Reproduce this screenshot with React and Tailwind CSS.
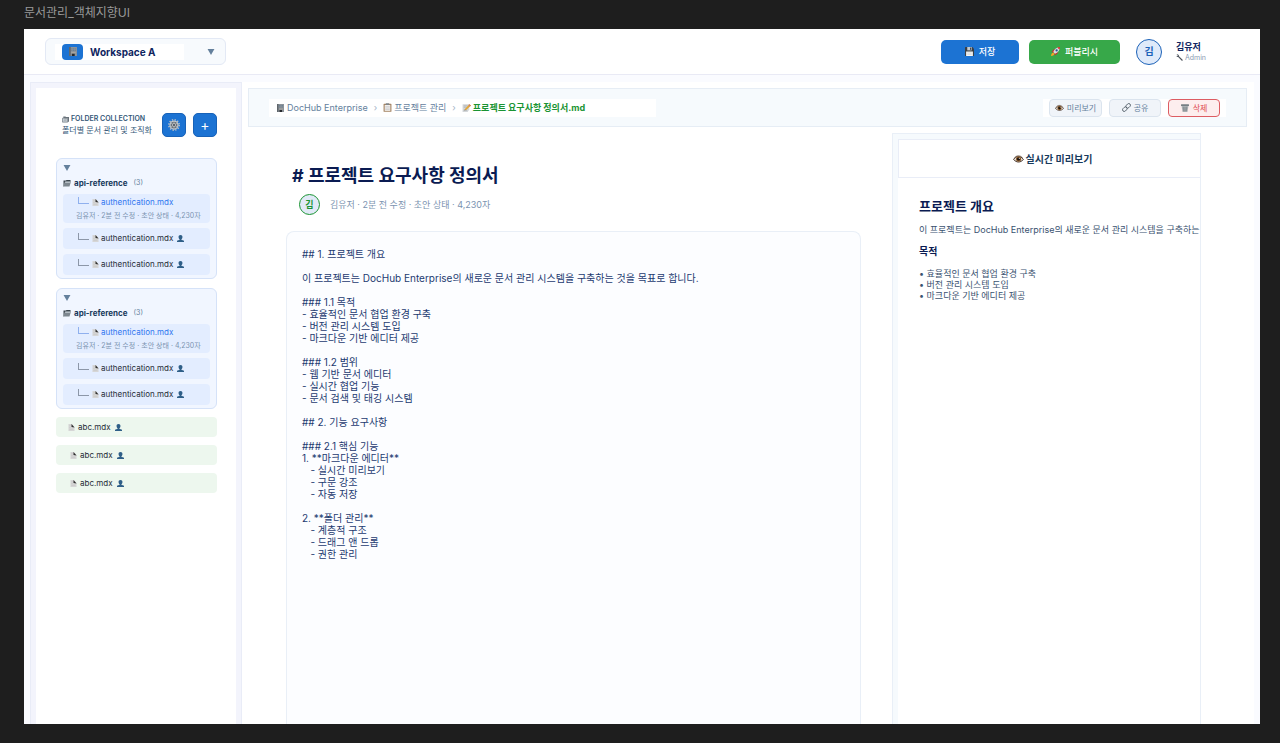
import React, { useState } from "react";

const INITIAL_TEXT = `## 1. 프로젝트 개요

이 프로젝트는 DocHub Enterprise의 새로운 문서 관리 시스템을 구축하는 것을 목표로 합니다.

### 1.1 목적
- 효율적인 문서 협업 환경 구축
- 버전 관리 시스템 도입
- 마크다운 기반 에디터 제공

### 1.2 범위
- 웹 기반 문서 에디터
- 실시간 협업 기능
- 문서 검색 및 태깅 시스템

## 2. 기능 요구사항

### 2.1 핵심 기능
1. **마크다운 에디터**
   - 실시간 미리보기
   - 구문 강조
   - 자동 저장

2. **폴더 관리**
   - 계층적 구조
   - 드래그 앤 드롭
   - 권한 관리`;

const folders = [
	{ id: 1, name: "api-reference", files: ["authentication.mdx", "authentication.mdx", "authentication.mdx"] },
	{ id: 2, name: "api-reference", files: ["authentication.mdx", "authentication.mdx", "authentication.mdx"] },
];

const looseFiles = [
	{ id: 1, name: "abc.mdx", indent: "pl-3" },
	{ id: 2, name: "abc.mdx", indent: "pl-[14px]" },
	{ id: 3, name: "abc.mdx", indent: "pl-[14px]" },
];

/* ---------- icons ---------- */

const BuildingIcon = ({ className }) => (
	<svg viewBox="0 0 16 16" className={className} aria-hidden="true">
		<rect x="1" y="0" width="14" height="16" fill="#8d9399" />
		<rect x="1" y="0" width="3" height="16" fill="#5f666c" />
		<path d="M5 2h2v2H5zM8 2h2v2H8zM11 2h2v2h-2zM5 5h2v2H5zM8 5h2v2H8zM11 5h2v2h-2z" fill="#6c8193" />
		<rect x="5" y="9" width="8" height="2" fill="#a9a6a0" />
		<rect x="6" y="12" width="5" height="4" fill="#26292d" />
	</svg>
);

const FloppyIcon = ({ className }) => (
	<svg viewBox="0 0 16 16" className={className} aria-hidden="true">
		<path d="M0 1a1 1 0 0 1 1-1h12l3 3v12a1 1 0 0 1-1 1H1a1 1 0 0 1-1-1z" fill="#3a3f45" />
		<rect x="4" y="0" width="8" height="6" fill="#c3c9ce" />
		<rect x="9" y="1" width="2" height="4" fill="#3a3f45" />
		<rect x="2" y="8" width="12" height="8" fill="#f6f6f4" />
		<path d="M4 10.500h8M4 13h8" stroke="#b6bcc1" strokeWidth="0.800" />
	</svg>
);

const RocketIcon = ({ className }) => (
	<svg viewBox="0 0 16 16" className={className} aria-hidden="true">
		<path d="M0 16c0-4 2-6 4-6l2 2c0 2-2 4-6 4z" fill="#f5a623" />
		<path d="M1 9l4-5h3L5 10zM7 15l5-4V8l-6 3z" fill="#c9302c" />
		<path d="M4 9c2-5 6-9 12-9 0 6-4 10-9 12z" fill="#d9dde1" />
		<path d="M11 1c2-1 4-1 5-1 0 1 0 3-1 5z" fill="#d6382f" />
		<circle cx="10" cy="6" r="2" fill="#2c4f8f" />
	</svg>
);

const WrenchIcon = ({ className }) => (
	<svg viewBox="0 0 16 16" className={className} aria-hidden="true">
		<path d="M1 0l4 1 2 3v1l9 9-2 2-9-9H3L0 4l3 1 1-2z" fill="#4e545c" />
	</svg>
);

const FoldersIcon = ({ className }) => (
	<svg viewBox="0 0 16 16" className={className} aria-hidden="true">
		<path d="M3 1h5l1 1h7v11h-3V5H3z" fill="#69737b" />
		<path d="M1 5h4l1 1h7v8H1z" fill="#c9d0d5" stroke="#69737b" strokeWidth="1.500" />
		<path d="M4 9.500h6" stroke="#69737b" />
	</svg>
);

const FolderIcon = ({ className }) => (
	<svg viewBox="0 0 16 16" className={className} aria-hidden="true">
		<path d="M1 3h5l1-1h8v4H4l-2 9H1z" fill="#3c464e" />
		<path d="M4 5h12l-3 10H1z" fill="#7d878f" />
		<path d="M4.500 5H16l-1 3H4z" fill="#b4bdc4" />
	</svg>
);

const GearIcon = ({ className }) => (
	<svg viewBox="0 0 24 24" className={className} aria-hidden="true">
		<circle cx="12" cy="12" r="10.500" fill="none" stroke="#b9bec3" strokeWidth="3" strokeDasharray="2.600 2.890" />
		<circle cx="12" cy="12" r="8" fill="#686f76" stroke="#c6cacd" strokeWidth="2.500" />
		<path d="M12 5v14M6 8.500l12 7M18 8.500l-12 7" stroke="#b3b8bc" strokeWidth="1.500" />
		<circle cx="12" cy="12" r="3" fill="#39424b" stroke="#d3d7da" strokeWidth="1.500" />
	</svg>
);

const PageIcon = ({ className }) => (
	<svg viewBox="0 0 16 16" className={className} aria-hidden="true">
		<path d="M1 0h8l6 7v9H1z" fill="#d6d6d6" />
		<path d="M8 0l7 8-7-1z" fill="#2f2f2f" />
		<path d="M3 4h3M3 8h3M3 12h9" stroke="#bdbdbd" />
	</svg>
);

const UserIcon = ({ className }) => (
	<svg viewBox="0 0 16 16" className={className} aria-hidden="true">
		<path d="M8 0c3 0 4.500 2 4.500 4.500S11 9 10 9.500V11l6 2v3H0v-3l6-2V9.500C5 9 3.500 7 3.500 4.500S5 0 8 0z" fill="#2f5f88" />
	</svg>
);

const ClipboardIcon = ({ className }) => (
	<svg viewBox="0 0 16 16" className={className} aria-hidden="true">
		<rect x="1" y="1.500" width="14" height="14" rx="1" fill="#a58463" />
		<rect x="3" y="3.500" width="10" height="10.500" fill="#f1efec" />
		<rect x="5" y="0.500" width="6" height="3" fill="#7f868c" />
		<path d="M4 6.500h8M4 9h8M4 11.500h8" stroke="#b9bcc0" />
	</svg>
);

const MemoIcon = ({ className }) => (
	<svg viewBox="0 0 16 16" className={className} aria-hidden="true">
		<path d="M1 2h12v9l-3 5H1z" fill="#d3d6d9" />
		<path d="M3 5h7M3 7.500h5M3 13h6" stroke="#9fa4aa" />
		<path d="M13 2l3 2.500L8 12l-3.500 1L5.500 10z" fill="#e2a637" />
		<path d="M13 2l3 2.500-2 1.500L11.500 3.500z" fill="#cf7a6b" />
		<path d="M4.500 13l.5-1.500 1 1z" fill="#333" />
	</svg>
);

const EyeIcon = ({ className }) => (
	<svg viewBox="0 0 20 16" className={className} aria-hidden="true">
		<path d="M1 9c3-5 6-6 9-6s6 2 9 6c-3 3-6 4.500-9 4.500S4 12 1 9z" fill="#e6dcd3" stroke="#4b3c33" strokeWidth="1.800" />
		<path d="M2 6c3-3 5-4 8-4s6 1.500 8 4" fill="none" stroke="#7b6a60" />
		<circle cx="10" cy="8" r="4.800" fill="#8a5a2b" />
		<circle cx="10" cy="8" r="2.800" fill="#17110d" />
		<circle cx="11.500" cy="6.500" r="1" fill="#fff" />
	</svg>
);

const LinkIcon = ({ className }) => (
	<svg viewBox="0 0 16 16" className={className} fill="none" stroke="#4c5862" strokeWidth="1.500" aria-hidden="true">
		<rect x="6.500" y="2" width="9" height="6" rx="3" transform="rotate(-45 11 5)" />
		<rect x="0.500" y="8" width="9" height="6" rx="3" transform="rotate(-45 5 11)" />
	</svg>
);

const TrashIcon = ({ className }) => (
	<svg viewBox="0 0 16 16" className={className} aria-hidden="true">
		<path d="M1 3h14l-2 13H3z" fill="#b4b9bc" />
		<path d="M4.500 5l1 10M8 5v10M11.500 5l-1 10M3 8h10M3.500 12h9" stroke="#6d7479" strokeWidth="0.900" />
		<rect x="0" y="0.500" width="16" height="3.500" rx="1" fill="#777f84" />
	</svg>
);

const Triangle = ({ className }) => (
	<svg viewBox="0 0 8 7" className={className} aria-hidden="true">
		<path d="M0 0h8L4 7z" fill="#64809c" />
	</svg>
);

/* ---------- header ---------- */

const Header = () => (
	<header className="flex h-[46px] shrink-0 items-center border-b border-[#e9eaf5] bg-white pl-[21px] pr-[54px]">
		<button className="flex h-[27px] w-[181px] items-center rounded-md border border-[#e3e9f5] bg-[#f7fafd] pl-[9px] pr-[10px]">
			<span className="flex h-4 w-[129px] items-center gap-[7px] bg-white pl-[7px]">
				<span className="flex h-4 w-[21px] items-center justify-center rounded-sm bg-[#1c73d3]">
					<BuildingIcon className="h-[9px] w-[10px]" />
				</span>
				<span className="text-[10px] font-bold leading-4 text-[#0f2560]">Workspace A</span>
			</span>
			<Triangle className="ml-auto h-[6px] w-[8px]" />
		</button>
		<div className="ml-auto flex items-center">
			<button className="flex h-6 w-[78px] items-center justify-center gap-[5px] rounded-[5px] bg-[#1c73d3] text-[9px] font-medium text-white">
				<FloppyIcon className="h-[9px] w-[9px]" />
				저장
			</button>
			<button className="ml-[10px] flex h-6 w-[91px] items-center justify-center gap-[5px] rounded-[5px] bg-[#37a849] text-[9px] font-medium text-white">
				<RocketIcon className="h-[9px] w-[9px]" />
				퍼블리시
			</button>
			<span className="ml-4 flex h-[26px] w-[26px] items-center justify-center rounded-full border border-[#1c62b8] bg-[#dfeafa] text-[10px] font-bold text-[#1c62b8]">
				김
			</span>
			<div className="ml-[14px] flex w-[30px] flex-col whitespace-nowrap">
				<span className="text-[9px] font-bold leading-3 text-[#0f2560]">김유저</span>
				<span className="flex items-center gap-[2px] text-[7px] leading-[10px] text-[#8a9bb3]">
					<WrenchIcon className="h-[7px] w-[7px]" />
					Admin
				</span>
			</div>
		</div>
	</header>
);

/* ---------- sidebar ---------- */

const Branch = ({ active }) => (
	<span
		className={
			active
				? "mb-[3px] h-[7px] w-[11px] border-b border-l border-[#8fb0ee]"
				: "mb-[3px] h-[7px] w-[11px] border-b border-l border-[#8c97a8]"
		}
	></span>
);

const FolderCard = ({ folder }) => {
	const [open, setOpen] = useState(true);

	return (
		<section className="flex flex-col rounded-md border border-[#d5e2f8] bg-[#f1f6ff] px-[6px] pb-[3px] pt-[5px]">
			<button
				onClick={() => setOpen(!open)}
				aria-label="폴더 접기"
				className="flex h-2 w-2 items-center justify-center"
			>
				<Triangle className="h-[6px] w-[8px]" />
			</button>
			<h2 className="mt-[5px] flex items-center text-[8px] leading-3 text-[#183a5c]">
				<FolderIcon className="mr-[3px] h-2 w-2" />
				<span className="font-bold">{folder.name}</span>
				<span className="ml-[6px] text-[7px] text-[#64809c]">({folder.files.length})</span>
			</h2>
			{open && (
				<ul className="mt-[5px] flex flex-col gap-[5px]">
					{folder.files.map((file, index) =>
						index === 0 ? (
							<li key={index} className="h-[29px] rounded bg-[#e3edff] pt-[2px]">
								<a href="#" className="flex items-center pl-[15px] text-[8px] leading-3 text-[#2f76f0]">
									<Branch active />
									<PageIcon className="ml-[3px] mr-[2px] h-[7px] w-[7px]" />
									{file}
								</a>
								<p className="whitespace-nowrap pl-[13px] pt-[2px] text-[7px] leading-3 text-[#7b93b0]">
									김유저 · 2분 전 수정 · 초안 상태 · 4,230자
								</p>
							</li>
						) : (
							<li key={index} className="h-[21px] rounded bg-[#e3edff] pt-1">
								<a href="#" className="flex items-center pl-[15px] text-[8px] leading-3 text-[#262c36]">
									<Branch />
									<PageIcon className="ml-[3px] mr-[2px] h-[7px] w-[7px]" />
									{file}
									<UserIcon className="ml-1 h-[7px] w-[7px]" />
								</a>
							</li>
						)
					)}
				</ul>
			)}
		</section>
	);
};

const Sidebar = () => (
	<aside className="flex w-[212px] shrink-0 flex-col border border-b-0 border-[#e9ecf7] bg-[#f3f4fc] px-[5px] pt-[5px]">
		<div className="flex-1 bg-white pl-5 pr-[19px] pt-[25px]">
			<div className="flex items-center">
				<div className="flex w-[101px] flex-col whitespace-nowrap pl-[6px]">
					<h1 className="flex items-center gap-[2px] text-[7px] font-semibold leading-[10px] text-[#355878]">
						<FoldersIcon className="h-[7px] w-[7px]" />
						FOLDER COLLECTION
					</h1>
					<p className="text-[8px] leading-3 text-[#355878]">폴더별 문서 관리 및 조직화</p>
				</div>
				<button
					aria-label="설정"
					className="ml-auto flex h-6 w-6 items-center justify-center rounded-[5px] border border-[#1862b8] bg-[#1c73d3]"
				>
					<GearIcon className="h-3 w-3" />
				</button>
				<button
					aria-label="추가"
					className="ml-[7px] flex h-6 w-6 items-center justify-center rounded-[5px] border border-[#1862b8] bg-[#1c73d3] text-[14px] leading-4 text-white"
				>
					+
				</button>
			</div>
			<div className="mt-[21px] flex flex-col gap-[9px]">
				{folders.map((folder) => (
					<FolderCard key={folder.id} folder={folder} />
				))}
			</div>
			<ul className="mt-2 flex flex-col gap-2">
				{looseFiles.map((file) => (
					<li key={file.id} className="flex h-5 items-center rounded bg-[#edf7ee]">
						<a href="#" className={`flex items-center text-[8px] leading-3 text-[#262c36] ${file.indent}`}>
							<PageIcon className="mr-[3px] h-[7px] w-[7px]" />
							{file.name}
							<UserIcon className="ml-1 h-[7px] w-[7px]" />
						</a>
					</li>
				))}
			</ul>
		</div>
	</aside>
);

/* ---------- main ---------- */

const Toolbar = () => (
	<div className="mr-[7px] flex h-[39px] shrink-0 items-center border border-[#e6edf5] bg-[#f6fafd] px-5">
		<nav className="flex h-[18px] w-[387px] items-center whitespace-nowrap bg-white pl-[7px] text-[9px] leading-3 text-[#64809c]">
			<BuildingIcon className="mr-[2px] h-2 w-[9px]" />
			<a href="#">DocHub Enterprise</a>
			<span className="mx-[6px] text-[#a3b3c6]">›</span>
			<ClipboardIcon className="mr-[2px] h-[9px] w-[9px]" />
			<a href="#">프로젝트 관리</a>
			<span className="mx-[6px] text-[#a3b3c6]">›</span>
			<MemoIcon className="mr-[2px] h-[9px] w-[9px]" />
			<a href="#" className="font-bold text-[#1a9433]">프로젝트 요구사항 정의서.md</a>
		</nav>
		<div className="ml-auto flex h-[18px] items-center gap-[7px] bg-white px-[6px] text-[8px] leading-3 text-[#64809c]">
			<button className="flex h-[18px] w-[53px] items-center justify-center gap-[3px] rounded border border-[#dbe4ee] bg-[#f0f4f9]">
				<EyeIcon className="h-2 w-[9px]" />
				미리보기
			</button>
			<button className="flex h-[18px] w-[52px] items-center justify-center gap-[3px] rounded border border-[#dbe4ee] bg-[#f0f4f9]">
				<LinkIcon className="h-[9px] w-[9px]" />
				공유
			</button>
			<button className="flex h-[18px] w-[52px] items-center justify-center gap-1 rounded border border-[#dd5c62] bg-[#fdeeee] text-[#e04a50]">
				<TrashIcon className="h-2 w-2" />
				삭제
			</button>
		</div>
	</div>
);

const Editor = () => {
	const [text, setText] = useState(INITIAL_TEXT);

	return (
		<section className="flex min-w-0 flex-1 flex-col pl-[38px] pr-[31px] pt-[35px]">
			<h1 className="pl-[6px] text-[18px] font-bold leading-7 text-[#0a1b52]"># 프로젝트 요구사항 정의서</h1>
			<div className="mt-1 flex items-center pl-[13px]">
				<span className="flex h-[21px] w-[21px] items-center justify-center rounded-full border border-[#1a9433] bg-[#e1e9f7] text-[9px] font-bold text-[#1a9433]">
					김
				</span>
				<p className="ml-[10px] text-[9px] leading-3 text-[#7b93b0]">김유저 · 2분 전 수정 · 초안 상태 · 4,230자</p>
			</div>
			<textarea
				aria-label="문서 내용"
				value={text}
				onChange={(event) => setText(event.target.value)}
				spellCheck={false}
				className="mt-4 w-full flex-1 resize-none rounded-t-lg border border-b-0 border-[#e9eff7] bg-[#fcfdff] px-[15px] pt-4 text-[10px] leading-3 text-[#1d3a70] outline-none"
			/>
		</section>
	);
};

const Preview = () => (
	<aside className="mr-[53px] flex w-[309px] shrink-0 flex-col overflow-hidden border border-b-0 border-[#e9eff7] bg-[#f6fafd] pl-[5px] pt-[5px]">
		<h2 className="flex h-[39px] shrink-0 items-center justify-center gap-[2px] border border-r-0 border-[#e9edf7] bg-white pl-[6px] text-[10px] font-bold leading-3 text-[#183a5c]">
			<EyeIcon className="h-[10px] w-[11px]" />
			실시간 미리보기
		</h2>
		<div className="flex-1 overflow-hidden whitespace-nowrap bg-white pl-[21px] pt-5 text-[9px] text-[#3a5270]">
			<h3 className="text-[13px] font-bold leading-4 text-[#0a1b52]">프로젝트 개요</h3>
			<p className="mt-[10px] leading-3">이 프로젝트는 DocHub Enterprise의 새로운 문서 관리 시스템을 구축하는</p>
			<h4 className="mt-[9px] text-[10px] font-bold leading-3 text-[#0a1b52]">목적</h4>
			<ul className="mt-[11px] leading-[11px]">
				<li>• 효율적인 문서 협업 환경 구축</li>
				<li>• 버전 관리 시스템 도입</li>
				<li>• 마크다운 기반 에디터 제공</li>
			</ul>
		</div>
	</aside>
);

const App = () => {
	return (
		<div className="flex h-screen flex-col bg-[#1e1e1e] pb-[19px] pl-6 pr-5 font-['Inter','Noto_Sans_CJK_KR',sans-serif]">
			<p className="h-[29px] shrink-0 pt-[5px] text-[12px] leading-4 text-[#999999]">문서관리_객체지향UI</p>
			<div className="flex min-h-0 flex-1 flex-col overflow-hidden bg-[#fafbff]">
				<Header />
				<div className="flex min-h-0 flex-1 pl-[6px] pr-[6px] pt-[7px]">
					<Sidebar />
					<main className="flex min-w-0 flex-1 flex-col bg-white pl-[6px] pt-[6px]">
						<Toolbar />
						<div className="flex min-h-0 flex-1">
							<Editor />
							<div className="flex pt-[6px]">
								<Preview />
							</div>
						</div>
					</main>
				</div>
			</div>
		</div>
	);
};

export default App;
